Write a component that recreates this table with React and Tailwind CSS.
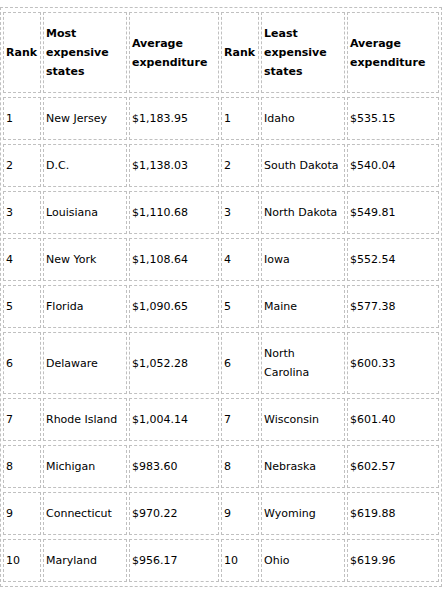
const rows = [
  ['1', 'New Jersey', '$1,183.95', '1', 'Idaho', '$535.15'],
  ['2', 'D.C.', '$1,138.03', '2', 'South Dakota', '$540.04'],
  ['3', 'Louisiana', '$1,110.68', '3', 'North Dakota', '$549.81'],
  ['4', 'New York', '$1,108.64', '4', 'Iowa', '$552.54'],
  ['5', 'Florida', '$1,090.65', '5', 'Maine', '$577.38'],
  ['6', 'Delaware', '$1,052.28', '6', 'North Carolina', '$600.33'],
  ['7', 'Rhode Island', '$1,004.14', '7', 'Wisconsin', '$601.40'],
  ['8', 'Michigan', '$983.60', '8', 'Nebraska', '$602.57'],
  ['9', 'Connecticut', '$970.22', '9', 'Wyoming', '$619.88'],
  ['10', 'Maryland', '$956.17', '10', 'Ohio', '$619.96'],
]

const cell = 'border border-dashed border-[#c0c0c0] px-[2px] py-[11px] text-left align-middle'

export default function App() {
  const headers = [
    { label: 'Rank', w: 'w-[38px]' },
    { label: 'Most expensive states', w: 'w-[84px]' },
    { label: 'Average expenditure', w: 'w-[90px]' },
    { label: 'Rank', w: 'w-[38px]' },
    { label: 'Least expensive states', w: 'w-[84px]' },
    { label: 'Average expenditure', w: 'w-[92px]' },
  ]

  return (
    <div className="min-h-[594px] bg-white pt-[7px] font-['DejaVu_Sans',Verdana,sans-serif] text-[11px] leading-[19px] text-black">
      <table className="w-[442px] table-fixed border-separate border-spacing-x-[2px] border-spacing-y-[4px] border border-dashed border-[#c0c0c0]">
        <thead>
          <tr>
            {headers.map((h, i) => (
              <th key={i} className={`${cell} ${h.w} font-bold`}>
                {h.label}
              </th>
            ))}
          </tr>
        </thead>
        <tbody>
          {rows.map((r, i) => (
            <tr key={i}>
              {r.map((v, j) => (
                <td key={j} className={cell}>
                  {v}
                </td>
              ))}
            </tr>
          ))}
        </tbody>
      </table>
    </div>
  )
}
